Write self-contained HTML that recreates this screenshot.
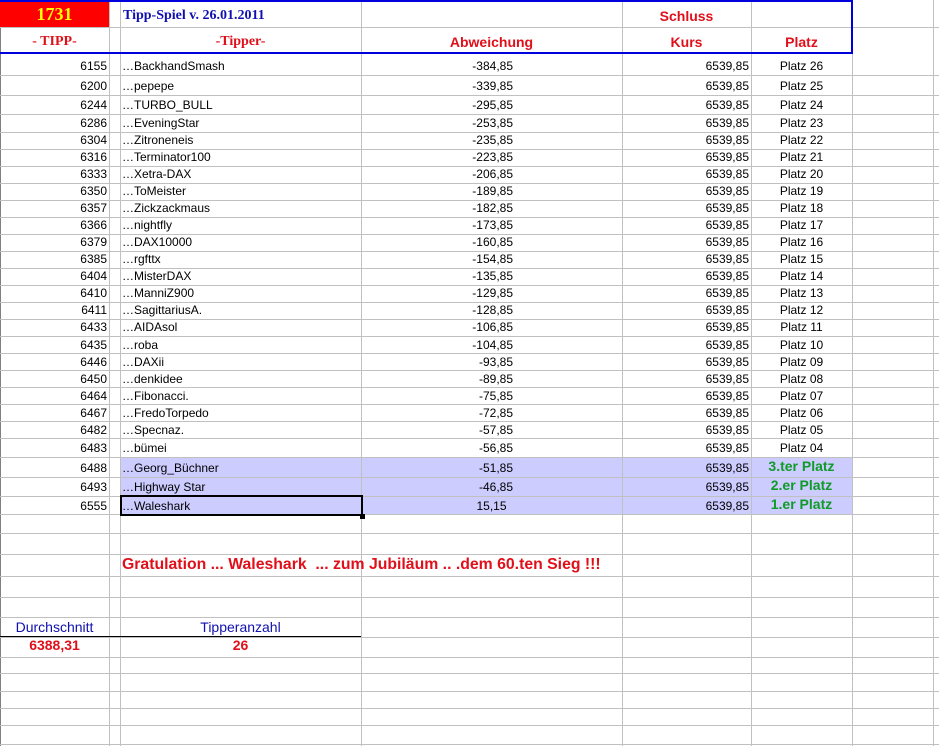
<!DOCTYPE html>
<html><head><meta charset="utf-8"><style>
*{margin:0;padding:0;box-sizing:border-box}
body{width:939px;height:746px;background:#fff;position:relative;overflow:hidden;font-family:"Liberation Sans",Arial,sans-serif;font-size:12px;color:#000}
.v{position:absolute;top:0;width:1px;height:746px;background:#c0c0c0}
.h{position:absolute;left:0;width:939px;height:1px;background:#c0c0c0}
.t{position:absolute;white-space:nowrap;line-height:14px}
.r{text-align:right}
.c{text-align:center}
.hl{position:absolute;left:120px;width:732px;background:#ccccff}
.red{color:#e0101a;font-weight:bold}
</style></head><body>
<div class="hl" style="top:457px;height:57px"></div>
<div style="position:absolute;left:0;top:0;width:109px;height:27px;background:#ff0000"></div>

<div class="v" style="left:0;background:#808080"></div>
<div class="v" style="left:109px"></div>
<div class="v" style="left:120px"></div>
<div class="v" style="left:361px"></div>
<div class="v" style="left:622px"></div>
<div class="v" style="left:751px"></div>
<div class="v" style="left:852px"></div>
<div class="v" style="left:933px"></div>

<div class="h" style="top:27px"></div>
<div class="h" style="top:75px"></div><div class="h" style="top:95px"></div><div class="h" style="top:114px"></div>
<div class="h" style="top:132px"></div><div class="h" style="top:149px"></div><div class="h" style="top:166px"></div>
<div class="h" style="top:183px"></div><div class="h" style="top:200px"></div><div class="h" style="top:217px"></div>
<div class="h" style="top:234px"></div><div class="h" style="top:251px"></div><div class="h" style="top:268px"></div>
<div class="h" style="top:285px"></div><div class="h" style="top:302px"></div><div class="h" style="top:319px"></div>
<div class="h" style="top:336px"></div><div class="h" style="top:353px"></div><div class="h" style="top:370px"></div>
<div class="h" style="top:387px"></div><div class="h" style="top:404px"></div><div class="h" style="top:421px"></div>
<div class="h" style="top:438px"></div><div class="h" style="top:457px"></div><div class="h" style="top:477px"></div>
<div class="h" style="top:496px"></div><div class="h" style="top:514px"></div><div class="h" style="top:533px"></div>
<div class="h" style="top:554px"></div><div class="h" style="top:576px"></div><div class="h" style="top:597px"></div>
<div class="h" style="top:617px"></div><div class="h" style="top:637px"></div><div class="h" style="top:657px"></div>
<div class="h" style="top:673px"></div><div class="h" style="top:691px"></div><div class="h" style="top:708px"></div>
<div class="h" style="top:725px"></div><div class="h" style="top:744px"></div>
<div style="position:absolute;left:0;top:636px;width:361px;height:1px;background:#000"></div>

<div style="position:absolute;left:0;top:0;width:853px;height:54px;border:2px solid #0000dd;border-left:none"></div>
<div style="position:absolute;left:0;top:0;width:109px;height:27px;background:#ff0000;border-top:2px solid #0000dd"></div>
<div class="t c" style="left:0;top:5px;width:109px;font-family:'Liberation Serif',serif;font-weight:bold;font-size:18px;line-height:18px;color:#ffff00">1731</div>
<div class="t" style="left:123px;top:9px;font-family:'Liberation Serif',serif;font-weight:bold;font-size:14px;color:#1010b0">Tipp-Spiel v. 26.01.2011</div>
<div class="t c red" style="left:622px;top:9px;width:129px;font-size:14px">Schluss</div>
<div class="t c" style="left:0;top:35px;width:109px;font-family:'Liberation Serif',serif;font-weight:bold;font-size:14px;color:#e0101a">- TIPP-</div>
<div class="t c" style="left:120px;top:35px;width:241px;font-family:'Liberation Serif',serif;font-weight:bold;font-size:14px;color:#e0101a">-Tipper-</div>
<div class="t c red" style="left:361px;top:35px;width:261px;font-size:14px">Abweichung</div>
<div class="t c red" style="left:622px;top:35px;width:129px;font-size:14px">Kurs</div>
<div class="t c red" style="left:751px;top:35px;width:101px;font-size:14px">Platz</div>

<div id="rows">
<div class="t r" style="left:0;top:59px;width:107px">6155</div><div class="t" style="left:122px;top:59px">…BackhandSmash</div><div class="t r" style="left:361px;top:59px;width:152px">-384,85</div><div class="t r" style="left:622px;top:59px;width:127px">6539,85</div><div class="t c" style="left:751px;top:59px;width:101px">Platz 26</div>
<div class="t r" style="left:0;top:79px;width:107px">6200</div><div class="t" style="left:122px;top:79px">…pepepe</div><div class="t r" style="left:361px;top:79px;width:152px">-339,85</div><div class="t r" style="left:622px;top:79px;width:127px">6539,85</div><div class="t c" style="left:751px;top:79px;width:101px">Platz 25</div>
<div class="t r" style="left:0;top:98px;width:107px">6244</div><div class="t" style="left:122px;top:98px">…TURBO_BULL</div><div class="t r" style="left:361px;top:98px;width:152px">-295,85</div><div class="t r" style="left:622px;top:98px;width:127px">6539,85</div><div class="t c" style="left:751px;top:98px;width:101px">Platz 24</div>
<div class="t r" style="left:0;top:116px;width:107px">6286</div><div class="t" style="left:122px;top:116px">…EveningStar</div><div class="t r" style="left:361px;top:116px;width:152px">-253,85</div><div class="t r" style="left:622px;top:116px;width:127px">6539,85</div><div class="t c" style="left:751px;top:116px;width:101px">Platz 23</div>
<div class="t r" style="left:0;top:133px;width:107px">6304</div><div class="t" style="left:122px;top:133px">…Zitroneneis</div><div class="t r" style="left:361px;top:133px;width:152px">-235,85</div><div class="t r" style="left:622px;top:133px;width:127px">6539,85</div><div class="t c" style="left:751px;top:133px;width:101px">Platz 22</div>
<div class="t r" style="left:0;top:150px;width:107px">6316</div><div class="t" style="left:122px;top:150px">…Terminator100</div><div class="t r" style="left:361px;top:150px;width:152px">-223,85</div><div class="t r" style="left:622px;top:150px;width:127px">6539,85</div><div class="t c" style="left:751px;top:150px;width:101px">Platz 21</div>
<div class="t r" style="left:0;top:167px;width:107px">6333</div><div class="t" style="left:122px;top:167px">…Xetra-DAX</div><div class="t r" style="left:361px;top:167px;width:152px">-206,85</div><div class="t r" style="left:622px;top:167px;width:127px">6539,85</div><div class="t c" style="left:751px;top:167px;width:101px">Platz 20</div>
<div class="t r" style="left:0;top:184px;width:107px">6350</div><div class="t" style="left:122px;top:184px">…ToMeister</div><div class="t r" style="left:361px;top:184px;width:152px">-189,85</div><div class="t r" style="left:622px;top:184px;width:127px">6539,85</div><div class="t c" style="left:751px;top:184px;width:101px">Platz 19</div>
<div class="t r" style="left:0;top:201px;width:107px">6357</div><div class="t" style="left:122px;top:201px">…Zickzackmaus</div><div class="t r" style="left:361px;top:201px;width:152px">-182,85</div><div class="t r" style="left:622px;top:201px;width:127px">6539,85</div><div class="t c" style="left:751px;top:201px;width:101px">Platz 18</div>
<div class="t r" style="left:0;top:218px;width:107px">6366</div><div class="t" style="left:122px;top:218px">…nightfly</div><div class="t r" style="left:361px;top:218px;width:152px">-173,85</div><div class="t r" style="left:622px;top:218px;width:127px">6539,85</div><div class="t c" style="left:751px;top:218px;width:101px">Platz 17</div>
<div class="t r" style="left:0;top:235px;width:107px">6379</div><div class="t" style="left:122px;top:235px">…DAX10000</div><div class="t r" style="left:361px;top:235px;width:152px">-160,85</div><div class="t r" style="left:622px;top:235px;width:127px">6539,85</div><div class="t c" style="left:751px;top:235px;width:101px">Platz 16</div>
<div class="t r" style="left:0;top:252px;width:107px">6385</div><div class="t" style="left:122px;top:252px">…rgfttx</div><div class="t r" style="left:361px;top:252px;width:152px">-154,85</div><div class="t r" style="left:622px;top:252px;width:127px">6539,85</div><div class="t c" style="left:751px;top:252px;width:101px">Platz 15</div>
<div class="t r" style="left:0;top:269px;width:107px">6404</div><div class="t" style="left:122px;top:269px">…MisterDAX</div><div class="t r" style="left:361px;top:269px;width:152px">-135,85</div><div class="t r" style="left:622px;top:269px;width:127px">6539,85</div><div class="t c" style="left:751px;top:269px;width:101px">Platz 14</div>
<div class="t r" style="left:0;top:286px;width:107px">6410</div><div class="t" style="left:122px;top:286px">…ManniZ900</div><div class="t r" style="left:361px;top:286px;width:152px">-129,85</div><div class="t r" style="left:622px;top:286px;width:127px">6539,85</div><div class="t c" style="left:751px;top:286px;width:101px">Platz 13</div>
<div class="t r" style="left:0;top:303px;width:107px">6411</div><div class="t" style="left:122px;top:303px">…SagittariusA.</div><div class="t r" style="left:361px;top:303px;width:152px">-128,85</div><div class="t r" style="left:622px;top:303px;width:127px">6539,85</div><div class="t c" style="left:751px;top:303px;width:101px">Platz 12</div>
<div class="t r" style="left:0;top:320px;width:107px">6433</div><div class="t" style="left:122px;top:320px">…AIDAsol</div><div class="t r" style="left:361px;top:320px;width:152px">-106,85</div><div class="t r" style="left:622px;top:320px;width:127px">6539,85</div><div class="t c" style="left:751px;top:320px;width:101px">Platz 11</div>
<div class="t r" style="left:0;top:338px;width:107px">6435</div><div class="t" style="left:122px;top:338px">…roba</div><div class="t r" style="left:361px;top:338px;width:152px">-104,85</div><div class="t r" style="left:622px;top:338px;width:127px">6539,85</div><div class="t c" style="left:751px;top:338px;width:101px">Platz 10</div>
<div class="t r" style="left:0;top:355px;width:107px">6446</div><div class="t" style="left:122px;top:355px">…DAXii</div><div class="t r" style="left:361px;top:355px;width:152px">-93,85</div><div class="t r" style="left:622px;top:355px;width:127px">6539,85</div><div class="t c" style="left:751px;top:355px;width:101px">Platz 09</div>
<div class="t r" style="left:0;top:372px;width:107px">6450</div><div class="t" style="left:122px;top:372px">…denkidee</div><div class="t r" style="left:361px;top:372px;width:152px">-89,85</div><div class="t r" style="left:622px;top:372px;width:127px">6539,85</div><div class="t c" style="left:751px;top:372px;width:101px">Platz 08</div>
<div class="t r" style="left:0;top:389px;width:107px">6464</div><div class="t" style="left:122px;top:389px">…Fibonacci.</div><div class="t r" style="left:361px;top:389px;width:152px">-75,85</div><div class="t r" style="left:622px;top:389px;width:127px">6539,85</div><div class="t c" style="left:751px;top:389px;width:101px">Platz 07</div>
<div class="t r" style="left:0;top:406px;width:107px">6467</div><div class="t" style="left:122px;top:406px">…FredoTorpedo</div><div class="t r" style="left:361px;top:406px;width:152px">-72,85</div><div class="t r" style="left:622px;top:406px;width:127px">6539,85</div><div class="t c" style="left:751px;top:406px;width:101px">Platz 06</div>
<div class="t r" style="left:0;top:423px;width:107px">6482</div><div class="t" style="left:122px;top:423px">…Specnaz.</div><div class="t r" style="left:361px;top:423px;width:152px">-57,85</div><div class="t r" style="left:622px;top:423px;width:127px">6539,85</div><div class="t c" style="left:751px;top:423px;width:101px">Platz 05</div>
<div class="t r" style="left:0;top:441px;width:107px">6483</div><div class="t" style="left:122px;top:441px">…bümei</div><div class="t r" style="left:361px;top:441px;width:152px">-56,85</div><div class="t r" style="left:622px;top:441px;width:127px">6539,85</div><div class="t c" style="left:751px;top:441px;width:101px">Platz 04</div>
<div class="t r" style="left:0;top:461px;width:107px">6488</div><div class="t" style="left:122px;top:461px">…Georg_Büchner</div><div class="t r" style="left:361px;top:461px;width:152px">-51,85</div><div class="t r" style="left:622px;top:461px;width:127px">6539,85</div><div class="t c" style="left:751px;top:459px;width:101px;color:#109a28;font-weight:bold;font-size:14px">3.ter Platz</div>
<div class="t r" style="left:0;top:480px;width:107px">6493</div><div class="t" style="left:122px;top:480px">…Highway Star</div><div class="t r" style="left:361px;top:480px;width:152px">-46,85</div><div class="t r" style="left:622px;top:480px;width:127px">6539,85</div><div class="t c" style="left:751px;top:478px;width:101px;color:#109a28;font-weight:bold;font-size:14px">2.er Platz</div>
<div class="t r" style="left:0;top:499px;width:107px">6555</div><div class="t" style="left:122px;top:499px">…Waleshark</div><div class="t c" style="left:361px;top:499px;width:261px">15,15</div><div class="t r" style="left:622px;top:499px;width:127px">6539,85</div><div class="t c" style="left:751px;top:497px;width:101px;color:#109a28;font-weight:bold;font-size:14px">1.er Platz</div>
</div>
<div style="position:absolute;left:120px;top:495px;width:243px;height:21px;border:2px solid #000"></div>
<div style="position:absolute;left:360px;top:514px;width:5px;height:5px;background:#000"></div>

<div class="t red" style="left:122px;top:557px;font-size:15.8px;line-height:16px">Gratulation ... Waleshark &nbsp;... zum Jubiläum .. .dem 60.ten Sieg !!!</div>
<div class="t c" style="left:0;top:620px;width:109px;color:#1010b0;font-size:14px">Durchschnitt</div>
<div class="t c" style="left:120px;top:620px;width:241px;color:#1010b0;font-size:14px">Tipperanzahl</div>
<div class="t c red" style="left:0;top:638px;width:109px;font-size:14px">6388,31</div>
<div class="t c red" style="left:120px;top:638px;width:241px;font-size:14px">26</div>
</body></html>
